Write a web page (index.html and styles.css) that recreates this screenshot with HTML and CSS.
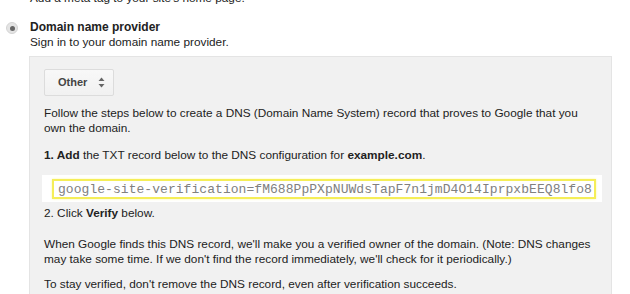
FILE: index.html
```html
<!DOCTYPE html>
<html lang="en">
<head>
    <meta charset="UTF-8">
    <title>Verify domain</title>
    <link rel="stylesheet" href="styles.css">
</head>
<body>
    <div class="methods">
        <div class="method">
            <div class="method-body">
                <div class="method-desc">Add a meta tag to your site's home page.</div>
            </div>
        </div>

        <div class="method selected">
            <span class="radio"><span class="dot"></span></span>
            <div class="method-body">
                <div class="method-title">Domain name provider</div>
                <div class="method-desc">Sign in to your domain name provider.</div>

                <div class="panel">
                    <div class="select">
                        <span>Other</span>
                        <svg class="arrows" width="7" height="11" viewBox="0 0 7 11">
                            <path d="M3.5 0.5 L6.5 4 L0.5 4 Z" fill="#666"/>
                            <path d="M3.5 10.5 L6.5 7 L0.5 7 Z" fill="#666"/>
                        </svg>
                    </div>

                    <p>Follow the steps below to create a DNS (Domain Name System) record that proves to Google that you own the domain.</p>
                    <p><b>1. Add</b> the TXT record below to the DNS configuration for <b>example.com</b>.</p>

                    <div class="record">
                        <div class="record-value">google-site-verification=fM688PpPXpNUWdsTapF7n1jmD4O14IprpxbEEQ8lfo8</div>
                    </div>

                    <p>2. Click <b>Verify</b> below.</p>
                    <p class="spaced">When Google finds this DNS record, we'll make you a verified owner of the domain. (Note: DNS changes may take some time. If we don't find the record immediately, we'll check for it periodically.)</p>
                    <p>To stay verified, don't remove the DNS record, even after verification succeeds.</p>
                </div>
            </div>
        </div>
    </div>
</body>
</html>
```

FILE: styles.css
```css
body {
    margin: 0;
    font-family: 'Liberation Sans', Arial, sans-serif;
    font-size: 11.8px;
    line-height: 15px;
    color: #222;
    background: #fff;
    overflow: hidden;
}

.methods {
    margin-top: -9px;
}

.method {
    display: flex;
    align-items: flex-start;
    padding-left: 30px;
    margin-bottom: 14px;
}

.method.selected {
    padding-left: 6px;
}

.radio {
    width: 12px;
    height: 12px;
    border-radius: 50%;
    background: #e4e4e4;
    border: 1px solid #d4d4d4;
    box-sizing: border-box;
    display: flex;
    align-items: center;
    justify-content: center;
    margin-top: 2px;
    margin-right: 12px;
    flex-shrink: 0;
}

.radio .dot {
    width: 5px;
    height: 5px;
    border-radius: 50%;
    background: #666;
}

.method-body {
    flex: 1;
    min-width: 0;
}

.method-title {
    font-weight: bold;
    font-size: 12px;
    color: #222;
}

.method-desc {
    color: #222;
}

.panel {
    margin: 6px 18px 0 -1px;
    background: #f1f1f1;
    border: 1px solid #e4e4e4;
    padding: 12px 18px 20px 14px;
}

.select {
    display: inline-flex;
    align-items: center;
    gap: 11px;
    height: 27px;
    padding: 0 8px 0 13px;
    box-sizing: border-box;
    border: 1px solid #dcdcdc;
    border-radius: 2px;
    background: linear-gradient(#f8f8f8, #f1f1f1);
    font-size: 11px;
    font-weight: bold;
    color: #444;
    margin-bottom: 10px;
}

.panel p {
    margin: 0 0 12px 0;
}

.panel p.spaced {
    margin: 16px 0 10px 0;
}

.record {
    background: #fff;
    margin: 0 -9px 4px -2px;
    padding: 4px 6px 3px 10px;
}

.record-value {
    border: 2px solid #f5ee58;
    box-shadow: 0 0 2px #fbf7a0;
    padding: 1px 4px 0;
    font-family: 'Liberation Mono', 'Courier New', monospace;
    font-size: 13px;
    letter-spacing: 0.05px;
    color: #808080;
    white-space: nowrap;
    overflow: hidden;
}
```
